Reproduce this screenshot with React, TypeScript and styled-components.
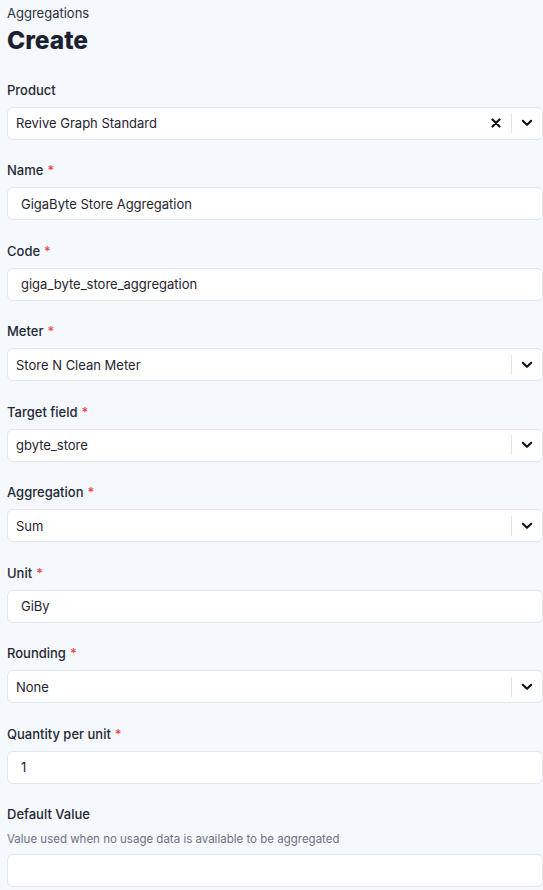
import React from "react";
import styled, { createGlobalStyle } from "styled-components";

const Global = createGlobalStyle`
  html, body { margin: 0; padding: 0; background: #f5f8fc; }
  body { font-family: Inter, "Noto Sans", sans-serif; color: #1f2937; }
  * { box-sizing: border-box; }
`;

const Page = styled.div`
  padding: 2.5px 0 0 7px;
  width: 543px;
  overflow: hidden;
`;

const Crumb = styled.div`
  font-size: 13px;
  line-height: 20px;
  color: #2a3140;
`;

const Title = styled.h1`
  margin: 1px 0 0;
  font-size: 24.5px;
  line-height: 32px;
  font-weight: 800;
  color: #1a2031;
`;

const Form = styled.div`
  margin-top: 24px;
  display: flex;
  flex-direction: column;
  gap: 20.5px;
`;

const Field = styled.div`
  display: flex;
  flex-direction: column;
`;

const Label = styled.label`
  font-size: 13px;
  line-height: 20px;
  font-weight: 500;
  color: #232936;
  margin-bottom: 7px;
`;

const Req = styled.span`
  color: #ef4444;
  margin-left: 4px;
`;

const Help = styled.div`
  font-size: 11.5px;
  line-height: 16px;
  color: #6b7280;
  margin: -0.5px 0 7px;
`;

const Box = styled.div<{ $select?: boolean }>`
  height: 33px;
  width: 536px;
  background: #ffffff;
  border: 1px solid #e3e8ef;
  border-radius: 6px;
  display: flex;
  align-items: center;
  padding-left: ${(p) => (p.$select ? "8px" : "13px")};
  font-size: 13px;
  color: #1f2430;
`;

const Value = styled.div`
  flex: 1;
`;

const Indicators = styled.div`
  display: flex;
  align-items: center;
  height: 100%;
`;

const Clear = styled.div`
  width: 22px;
  display: flex;
  justify-content: center;
  align-items: center;
`;

const Sep = styled.div`
  width: 1px;
  height: 20px;
  background: #e2e6ec;
  margin-left: 4px;
`;

const Chevron = styled.div`
  width: 30px;
  display: flex;
  justify-content: center;
  align-items: center;
`;

const XIcon = () => (
  <svg width="10" height="10" viewBox="0 0 10 10">
    <path d="M1.5 1.5 L8.5 8.5 M8.5 1.5 L1.5 8.5" stroke="#111" strokeWidth="2.2" strokeLinecap="round" />
  </svg>
);

const Down = () => (
  <svg width="12" height="8" viewBox="0 0 12 8">
    <path d="M1.8 1.8 L6 5.8 L10.2 1.8" stroke="#111" strokeWidth="2.1" fill="none" strokeLinecap="round" strokeLinejoin="round" />
  </svg>
);

type F = { label: string; value: string; req?: boolean; select?: boolean; clear?: boolean; help?: string };

const fields: F[] = [
  { label: "Product", value: "Revive Graph Standard", select: true, clear: true },
  { label: "Name", value: "GigaByte Store Aggregation", req: true },
  { label: "Code", value: "giga_byte_store_aggregation", req: true },
  { label: "Meter", value: "Store N Clean Meter", req: true, select: true },
  { label: "Target field", value: "gbyte_store", req: true, select: true },
  { label: "Aggregation", value: "Sum", req: true, select: true },
  { label: "Unit", value: "GiBy", req: true },
  { label: "Rounding", value: "None", req: true, select: true },
  { label: "Quantity per unit", value: "1", req: true },
  { label: "Default Value", value: "", help: "Value used when no usage data is available to be aggregated" },
];

export default function App() {
  return (
    <Page>
      <Global />
      <Crumb>Aggregations</Crumb>
      <Title>Create</Title>
      <Form>
        {fields.map((f) => (
          <Field key={f.label}>
            <Label>
              {f.label}
              {f.req && <Req>*</Req>}
            </Label>
            {f.help && <Help>{f.help}</Help>}
            <Box $select={f.select}>
              <Value>{f.value}</Value>
              {f.select && (
                <Indicators>
                  {f.clear && (
                    <Clear>
                      <XIcon />
                    </Clear>
                  )}
                  <Sep />
                  <Chevron>
                    <Down />
                  </Chevron>
                </Indicators>
              )}
            </Box>
          </Field>
        ))}
      </Form>
    </Page>
  );
}
